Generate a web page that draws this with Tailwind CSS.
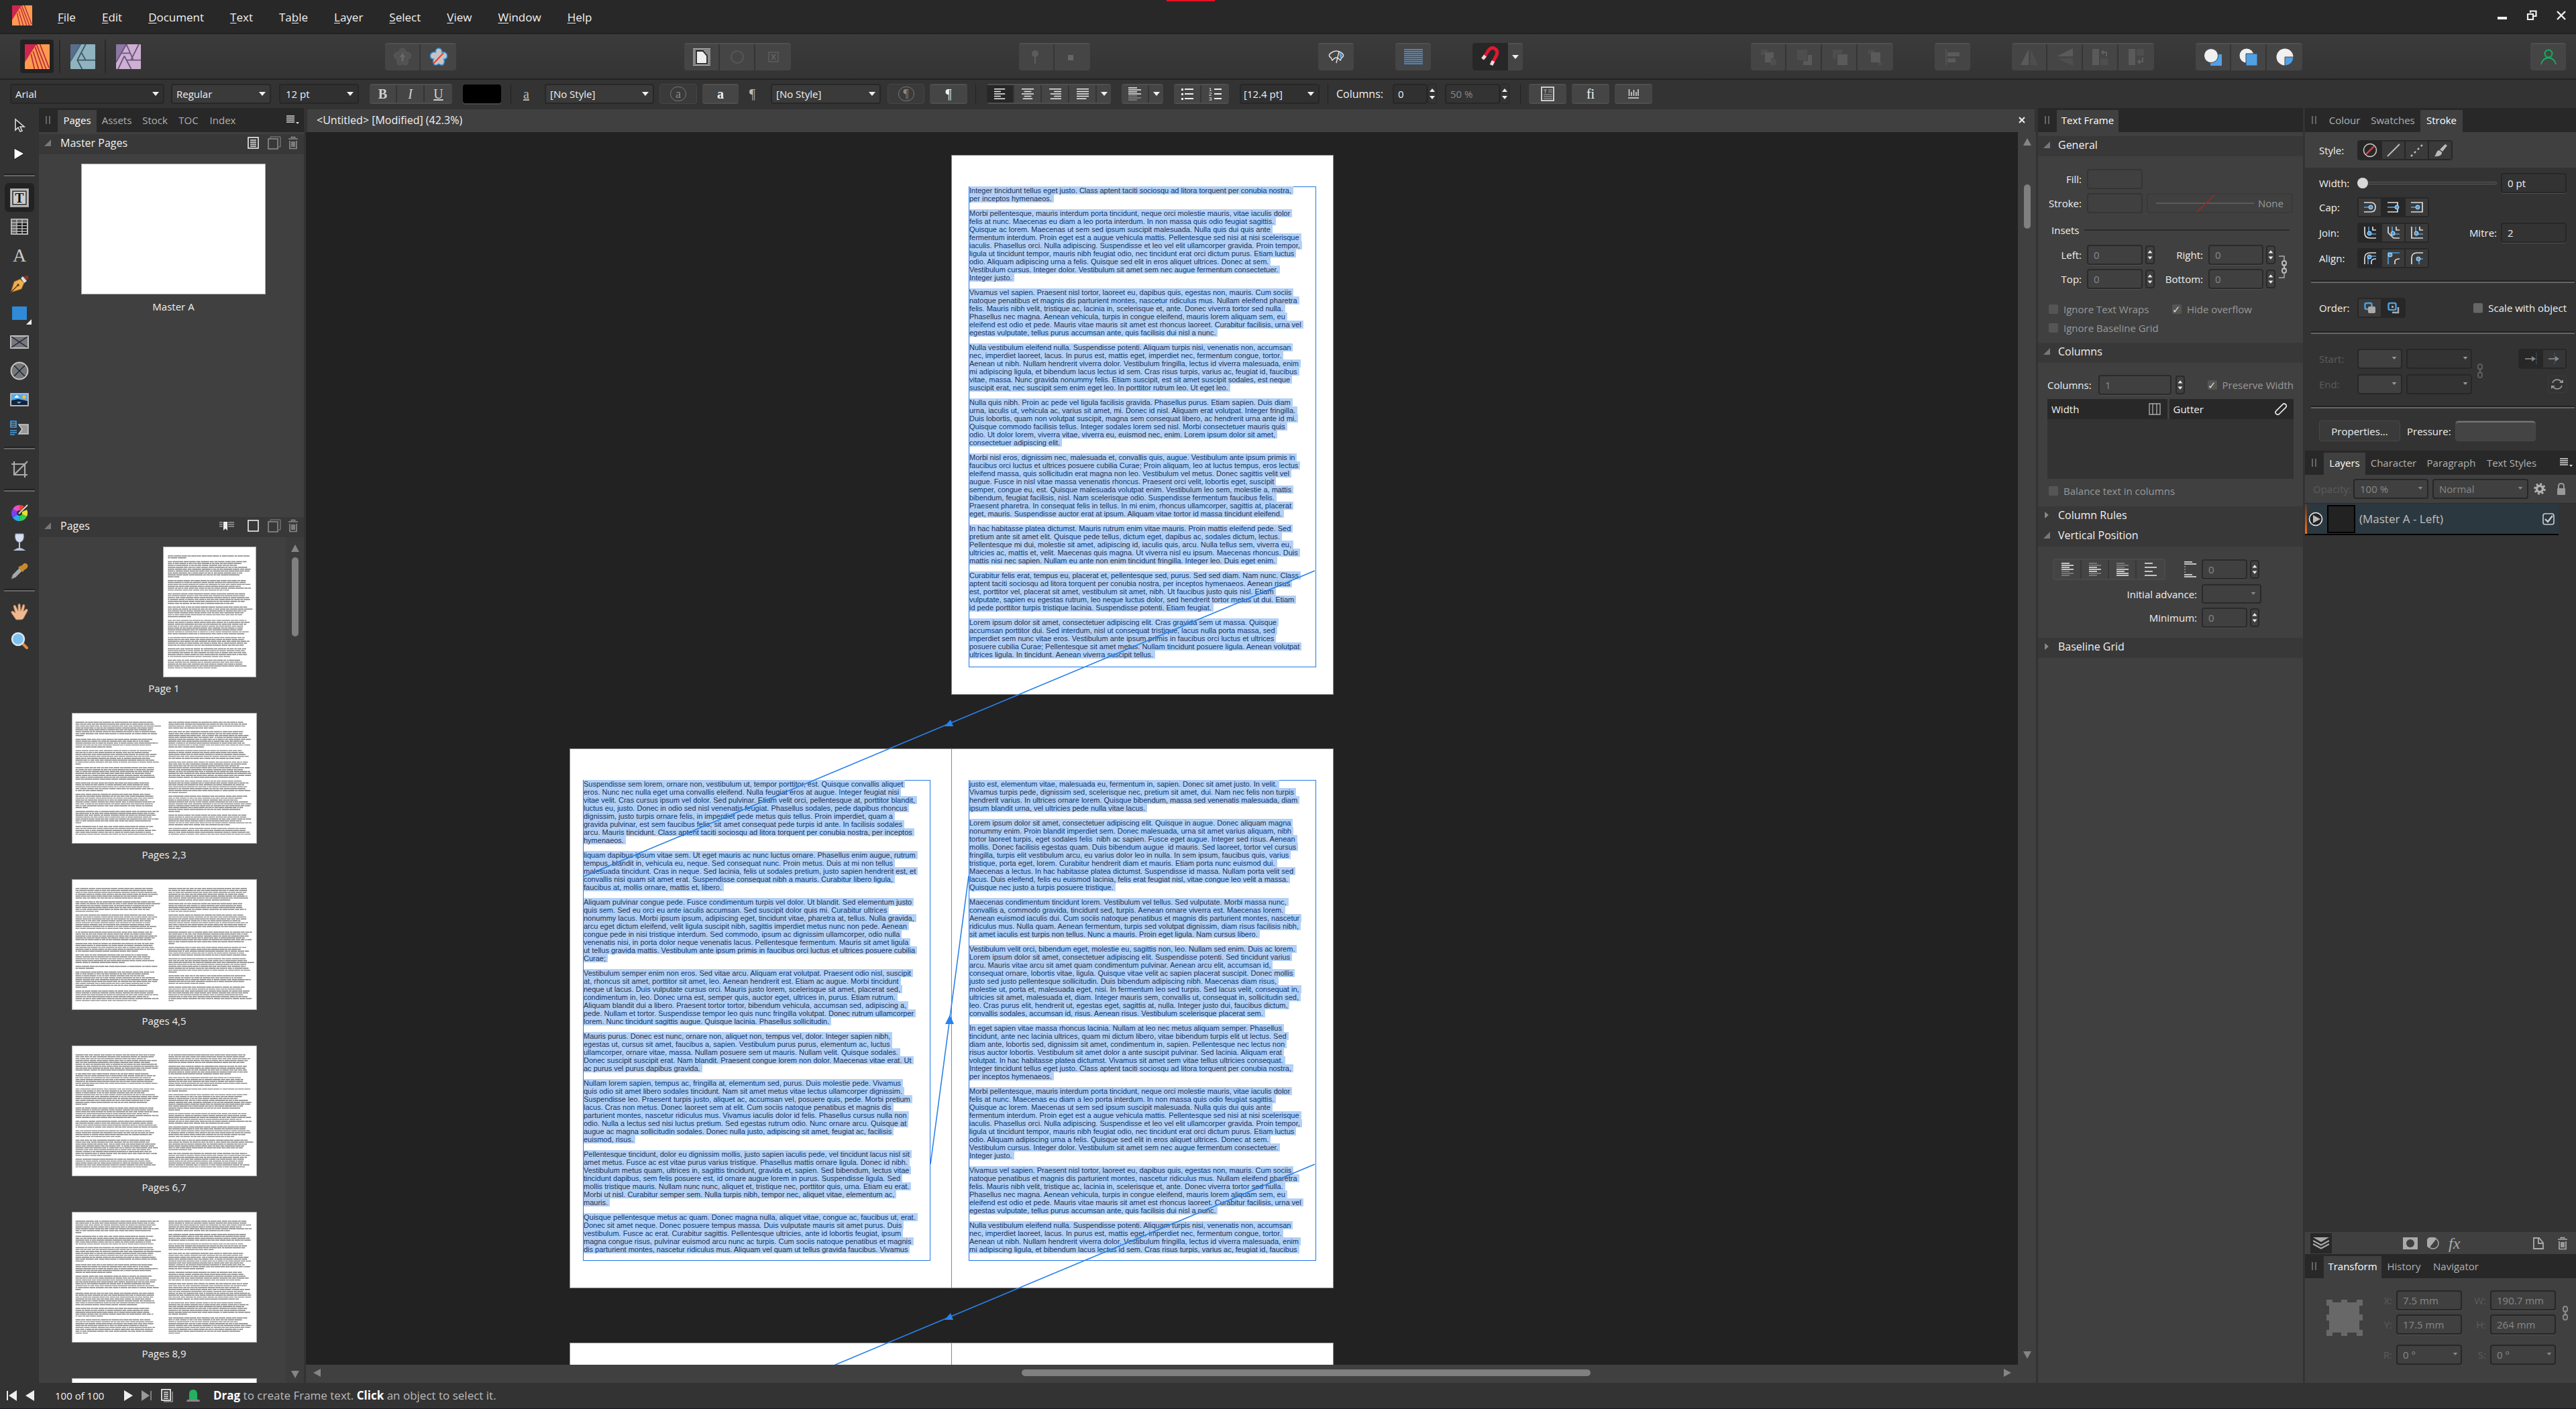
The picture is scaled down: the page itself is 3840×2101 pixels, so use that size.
<!DOCTYPE html>
<html lang="en">
<head>
  <meta charset="utf-8" />
  <title>&lt;Untitled&gt; [Modified] (42.3%)</title>
  <script src="https://cdn.jsdelivr.net/npm/@tailwindcss/browser@4"></script>
</head>
<body class="flex flex-col h-screen overflow-hidden bg-[#333] text-[#f0f0f0] text-[15px] leading-5 font-['Open_Sans','Noto_Sans',sans-serif] [&_select]:appearance-none [&_select]:size-full [&_select]:outline-none [&_svg]:shrink-0 [&_button]:flex [&_button]:items-center [&_button]:justify-center">

  <!-- shared icons -->
  <svg class="hidden">
    <symbol id="publisher" viewBox="0 0 36 36">
      <rect width="36" height="36" rx="1" fill="#ff9a50" />
      <path d="M0 0H17L0 26Z" fill="#cf2650" />
      <path d="M15 4 26 36M12 10 20 36M9 14 14 36M17 0 31 36M22 0 35 34" stroke="#b5283c" stroke-width="1.6" fill="none" />
    </symbol>
    <symbol id="caret" viewBox="0 0 10 6"><path d="M0 0H10L5 6Z" fill="currentColor" /></symbol>
    <symbol id="fold" viewBox="0 0 10 10"><path d="M10 0V10H0Z" fill="#777" /></symbol>
    <symbol id="unfold" viewBox="0 0 10 14"><path d="M1 0L9 7L1 14Z" fill="#8a8a8a" /></symbol>
    <symbol id="grip" viewBox="0 0 8 12"><path d="M1 0V12M6 0V12" stroke="#666" stroke-width="2" /></symbol>
    <symbol id="panel-menu" viewBox="0 0 20 14"><path d="M0 1H12M0 4H12M0 7H12M0 10H12" stroke="#ddd" stroke-width="1.6" /><path d="M14 10H19L16.500 13Z" fill="#ddd" /></symbol>
    <symbol id="trash" viewBox="0 0 16 20"><path d="M1 4H15M5.500 3V1.500H10.500V3M3 7V18.500H13V7M6 8V16M8 8V16M10 8V16" fill="none" stroke="currentColor" stroke-width="1.7" /></symbol>
    <symbol id="blank-page" viewBox="0 0 18 18"><rect x="1" y="1" width="15" height="16" fill="none" stroke="currentColor" stroke-width="1.600" /></symbol>
    <symbol id="copy-page" viewBox="0 0 20 20"><path d="M4 3V1H19V16H16" fill="none" stroke="currentColor" /><rect x="1" y="4" width="14" height="15" fill="none" stroke="currentColor" stroke-width="1.600" /></symbol>
    <symbol id="chain" viewBox="0 0 10 22"><rect x="2" y="1" width="6" height="8" rx="3" fill="none" stroke="currentColor" stroke-width="2" /><rect x="2" y="13" width="6" height="8" rx="3" fill="none" stroke="currentColor" stroke-width="2" /><path d="M5 7V15" stroke="currentColor" stroke-width="2" /></symbol>
    <symbol id="spin" viewBox="0 0 14 28"><path d="M3 11 7 6 11 11ZM3 17 7 22 11 17Z" fill="#eee" /></symbol>
    <symbol id="up" viewBox="0 0 12 12"><path d="M6 1 12 12H0Z" fill="#858585" /></symbol>
    <symbol id="down" viewBox="0 0 12 12"><path d="M6 11 12 0H0Z" fill="#858585" /></symbol>
    <symbol id="al-left" viewBox="0 0 20 20"><path d="M0 2H18M0 6H11M0 10H18M0 14H11M0 18H18" stroke="currentColor" stroke-width="1.700" /></symbol>
  </svg>

  <!-- menu bar -->
  <header class="relative flex items-center h-[51px] shrink-0 bg-[#282828] border-b-2 border-[#222]">
    <div class="absolute top-0 left-[1739px] w-[72px] h-0.5 bg-[#e81123]"></div>
    <svg class="ml-[18px] size-[30px] -mt-1"><use href="#publisher" /></svg>
    <nav class="flex gap-[39px] ml-[38px] text-[17px] leading-6 pt-0.5 [&_u]:underline-offset-2">
      <a href="#"><u>F</u>ile</a>
      <a href="#"><u>E</u>dit</a>
      <a href="#"><u>D</u>ocument</a>
      <a href="#"><u>T</u>ext</a>
      <a href="#">Ta<u>b</u>le</a>
      <a href="#"><u>L</u>ayer</a>
      <a href="#"><u>S</u>elect</a>
      <a href="#"><u>V</u>iew</a>
      <a href="#"><u>W</u>indow</a>
      <a href="#"><u>H</u>elp</a>
    </nav>
    <div class="flex gap-7 ml-auto mr-[14px] -mt-1">
      <button aria-label="Minimise"><svg class="size-4" viewBox="0 0 16 16"><path d="M1 10H15V14H1Z" fill="#f0f0f0" /></svg></button>
      <button aria-label="Restore"><svg class="size-4" viewBox="0 0 16 16"><path d="M6 4V1.500H14.500V9H11M2 6H10V14H2Z" fill="none" stroke="#f0f0f0" stroke-width="2.200" /></svg></button>
      <button aria-label="Close"><svg class="size-4" viewBox="0 0 16 16"><path d="M2 2 14 14M14 2 2 14" stroke="#f0f0f0" stroke-width="2.400" /></svg></button>
    </div>
  </header>

  <!-- toolbar -->
  <div class="flex items-center justify-between h-[68px] shrink-0 pl-[30px] pr-[15px] bg-linear-to-b from-[#3b3b3b] to-[#343434] border-b-2 border-[#222]">
    <div class="flex items-center w-[204px] [&>button]:h-[50px]">
      <button aria-label="Publisher" class="w-[50px] rounded bg-[#222]"><svg class="size-[37px]"><use href="#publisher" /></svg></button>
      <i class="w-0.5 h-[50px] ml-2 bg-[#292929]"></i>
      <button aria-label="Designer" class="w-[66px]">
        <svg class="size-[37px]" viewBox="0 0 36 36"><rect width="36" height="36" rx="1" fill="#8fb3bf" /><path d="M0 0H15L0 24Z" fill="#586f8e" /><path d="M22 0 10 23 17 36M10 23H36M16 12 22 23" stroke="#405866" stroke-width="1.800" fill="none" /><path d="M15 0 0 25" stroke="#48607a" stroke-width="1.500" /></svg>
      </button>
      <i class="w-0.5 h-[50px] bg-[#292929]"></i>
      <button aria-label="Photo" class="w-[66px]">
        <svg class="size-[37px]" viewBox="0 0 36 36"><rect width="36" height="36" rx="1" fill="#cdb0d2" /><path d="M0 0H15L0 24Z" fill="#8c78a2" /><path d="M15 0 0 26M8 13H21M15 0 25 23M33 0 22 22M12 17 22 36M12 17 3 36M15 23H36" stroke="#6d5680" stroke-width="1.800" fill="none" /></svg>
      </button>
    </div>

    <div class="flex overflow-hidden h-[41px] rounded-sm bg-[#454545] border-t-2 border-[#505050] divide-x-2 divide-[#353535] [&>button]:w-[53px]">
      <button aria-label="Set defaults"><svg class="size-[30px]" viewBox="0 0 30 30"><path d="M15 2c4 0 5 4 4.500 6 4-1 8 1 8 5s-3 5-5 5c2 4 0 9-3 9-2 0-3-1-4.500-2-1.500 1-2.500 2-4.500 2-3 0-5-5-3-9-2 0-5-1-5-5s4-6 8-5C10 6 11 2 15 2Z" fill="#525252" stroke="#5c5c5c" /><path d="M15 9 19 15H16.500V21H13.500V15H11Z" fill="#6a6a6a" /></svg></button>
      <button aria-label="Revert defaults"><svg class="size-[30px]" viewBox="0 0 30 30"><path d="M15 2c4 0 5 4 4.500 6 4-1 8 1 8 5s-3 5-5 5c2 4 0 9-3 9-2 0-3-1-4.500-2-1.500 1-2.500 2-4.500 2-3 0-5-5-3-9-2 0-5-1-5-5s4-6 8-5C10 6 11 2 15 2Z" fill="#c4c4c4" stroke="#3c94dc" stroke-width="1.500" /><path d="M22 9 7 25" stroke="#ef3b30" stroke-width="2" /></svg></button>
    </div>

    <div class="flex overflow-hidden h-[41px] rounded-sm bg-[#454545] border-t-2 border-[#505050] divide-x-2 divide-[#353535] [&>button]:w-[53px]">
      <button aria-label="Text wrap"><svg class="size-7" viewBox="0 0 28 28"><path d="M1 2H27M1 5H27M1 8H27M1 11H27M1 14H27M1 17H27M1 20H27M1 23H27M1 26H27" stroke="#aaa" stroke-width="1.800" /><path d="M6 5H16L22 12V24H6Z" fill="#eee" stroke="#333" stroke-width="2" /></svg></button>
      <button aria-label="Edit wrap outline"><svg class="size-7" viewBox="0 0 28 28"><circle cx="14" cy="14" r="9" fill="none" stroke="#575757" stroke-width="2" /></svg></button>
      <button aria-label="Reset wrap"><svg class="size-7" viewBox="0 0 28 28"><rect x="7" y="7" width="14" height="14" fill="none" stroke="#575757" stroke-width="2" /><path d="M11 10 17 18M17 10 11 18" stroke="#626262" stroke-width="2" /></svg></button>
    </div>

    <div class="flex overflow-hidden h-[41px] rounded-sm bg-[#454545] border-t-2 border-[#505050] divide-x-2 divide-[#353535] [&>button]:w-[53px]">
      <button aria-label="Pin"><svg class="size-7" viewBox="0 0 28 28"><circle cx="12" cy="9" r="5" fill="#5c5c5c" /><path d="M12 12V24" stroke="#5c5c5c" stroke-width="2" /></svg></button>
      <button aria-label="Inline"><svg class="size-7" viewBox="0 0 28 28"><path d="M7 11H15V19H7Z" fill="#666" /></svg></button>
    </div>

    <div class="flex gap-[62px]">
      <button aria-label="Preview" class="w-[53px] h-[41px] rounded-sm bg-[#454545] border-t-2 border-[#505050]"><svg class="size-6" viewBox="0 0 24 24"><path d="M4 13C0 11 1 8 4 6Q12 0 20 6C23 8 24 11 20 13L18 17 15 14Q12 12 9 14L6 17Z" fill="#444" stroke="#ddd" stroke-width="1.600" /><path d="M16 5 21 9 18 15Z" fill="#58a9ea" /><path d="M16 4 12 21" stroke="#ddd" stroke-width="1.500" /></svg></button>
      <button aria-label="Baseline grid" class="w-[53px] h-[41px] rounded-sm bg-[#454545] border-t-2 border-[#505050]"><svg class="size-7" viewBox="0 0 28 28"><path d="M0 3H28M0 6H28M0 9H28M0 12H28M0 15H28M0 18H28M0 21H28M0 24H28" stroke="#5b96d8" stroke-width="1.400" /></svg></button>
      <div class="flex overflow-hidden h-[41px] rounded-sm">
        <button aria-label="Snapping" class="w-[53px] bg-[#272727]"><svg class="size-8" viewBox="0 0 32 32"><path d="M6 18 13 7Q18 1 23 5Q28 9 24 16L18 27" fill="none" stroke="#e01832" stroke-width="5" /><path d="M8 15 4 20M20 23 17 29" stroke="#e8dada" stroke-width="5" /></svg></button>
        <button aria-label="Snapping options" class="w-[22px] bg-[#454545] border-t-2 border-[#505050]"><svg class="w-2.5 h-1.5"><use href="#caret" /></svg></button>
      </div>
    </div>

    <div class="flex gap-[62px]">
      <div class="flex overflow-hidden h-[41px] rounded-sm bg-[#454545] border-t-2 border-[#505050] divide-x-2 divide-[#353535] [&>button]:w-[53px]">
        <button aria-label="Move to back"><svg class="size-7" viewBox="0 0 28 28"><path d="M3 3H13V11H3ZM17 17H26V26H17Z" fill="#4e4e4e" /><path d="M9 7H22V16H18V22H9Z" fill="#5a5a5a" /></svg></button>
        <button aria-label="Move back one"><svg class="size-7" viewBox="0 0 28 28"><path d="M4 3H19V19H4Z" fill="#4e4e4e" /><path d="M20 11H26V26H13V20H20Z" fill="#5a5a5a" /></svg></button>
        <button aria-label="Move forward one"><svg class="size-7" viewBox="0 0 28 28"><path d="M4 3H18V9H9V16H4Z" fill="#4e4e4e" /><path d="M11 10H26V26H11Z" fill="#5a5a5a" /></svg></button>
        <button aria-label="Move to front"><svg class="size-7" viewBox="0 0 28 28"><path d="M3 3H12V9H3ZM18 22H24V26H18Z" fill="#4e4e4e" /><path d="M7 7H21V22H7Z" fill="#5a5a5a" /></svg></button>
      </div>
      <button aria-label="Alignment" class="w-[53px] h-[41px] rounded-sm bg-[#454545] border-t-2 border-[#505050]"><svg class="size-7" viewBox="0 0 28 28"><path d="M4 2V26" stroke="#525252" stroke-width="2" /><path d="M6 7H24V13H6ZM6 16H18V22H6Z" fill="#5a5a5a" /></svg></button>
      <div class="flex overflow-hidden h-[41px] rounded-sm bg-[#454545] border-t-2 border-[#505050] divide-x-2 divide-[#353535] [&>button]:w-[53px]">
        <button aria-label="Flip horizontal"><svg class="size-7" viewBox="0 0 28 28"><path d="M13 2V26H1Z" fill="#5a5a5a" /><path d="M16 2V26H27Z" fill="#4e4e4e" /></svg></button>
        <button aria-label="Flip vertical"><svg class="size-7" viewBox="0 0 28 28"><path d="M26 1V13H2Z" fill="#5a5a5a" /><path d="M26 16V27L2 16Z" fill="#4e4e4e" /></svg></button>
        <button aria-label="Rotate left"><svg class="size-7" viewBox="0 0 28 28"><path d="M2 2H12V26H2Z" fill="#5a5a5a" /><path d="M14 16H25V26H14Z" fill="#4e4e4e" /><path d="M23 13V7H17M19 4 16 7 19 10" stroke="#5f5f5f" stroke-width="2" fill="none" /></svg></button>
        <button aria-label="Rotate right"><svg class="size-7" viewBox="0 0 28 28"><path d="M2 2H12V26H2Z" fill="#5a5a5a" /><path d="M14 2H25V12H14Z" fill="#4e4e4e" /><path d="M23 15V21H17M19 18 16 21 19 24" stroke="#5f5f5f" stroke-width="2" fill="none" /></svg></button>
      </div>
      <div class="flex overflow-hidden h-[41px] rounded-sm bg-[#454545] border-t-2 border-[#505050] divide-x-2 divide-[#353535] [&>button]:w-[53px]">
        <button aria-label="Insert behind"><svg class="size-7" viewBox="0 0 28 28"><path d="M10 10H27V27H10Z" fill="#50a1e4" /><circle cx="11" cy="12" r="10.500" fill="#f0f0f0" stroke="#444" /></svg></button>
        <button aria-label="Insert on top"><svg class="size-7" viewBox="0 0 28 28"><circle cx="11" cy="12" r="10.500" fill="#f0f0f0" /><path d="M10 9H27V27H10Z" fill="#50a1e4" stroke="#444" /></svg></button>
        <button aria-label="Insert inside"><svg class="size-7" viewBox="0 0 28 28"><circle cx="14" cy="14" r="12.500" fill="#f0f0f0" /><path d="M14 14H27Q26 26 14 27Z" fill="#50a1e4" stroke="#444" /></svg></button>
      </div>
    </div>

    <button aria-label="Account" class="w-[53px] h-[41px] rounded-sm bg-[#454545] border-t-2 border-[#505050]"><svg class="size-6" viewBox="0 0 24 24"><circle cx="12" cy="7" r="5.500" fill="none" stroke="#10b25f" stroke-width="1.900" /><path d="M1 23Q3 14 12 13Q21 14 23 23" fill="none" stroke="#10b25f" stroke-width="1.900" /></svg></button>
  </div>

  <!-- context toolbar -->
  <div class="flex items-center h-[42px] shrink-0 pl-[15px] [&>i]:w-px [&>i]:h-[30px] [&>i]:bg-[#222]">
    <div class="relative w-[230px] h-[30px]">
      <select aria-label="Font" class="pl-1.5 rounded border-2 border-[#272727] bg-[#303030]"><option>Arial</option></select>
      <svg class="absolute right-2 top-3 w-2.5 h-1.5"><use href="#caret" /></svg>
    </div>
    <div class="relative w-[149px] h-[30px] ml-2.5">
      <select aria-label="Font style" class="pl-1.5 rounded border-2 border-[#272727] bg-[#3a3a3a]"><option>Regular</option></select>
      <svg class="absolute right-2 top-3 w-2.5 h-1.5"><use href="#caret" /></svg>
    </div>
    <div class="relative w-[119px] h-[30px] ml-3">
      <select aria-label="Font size" class="pl-2 rounded border-2 border-[#272727] bg-[#303030]"><option>12 pt</option></select>
      <svg class="absolute right-2 top-3 w-2.5 h-1.5"><use href="#caret" /></svg>
    </div>
    <div class="flex h-[30px] ml-4 rounded-sm bg-[#454545] border-y-2 border-[#4f4f4f] divide-x-2 divide-[#353535] text-xl text-[#d0d0d0] font-['Liberation_Serif',serif] [&>button]:w-[41px]">
      <button class="font-bold">B</button>
      <button class="italic">I</button>
      <button class="underline">U</button>
    </div>
    <button aria-label="Text colour" class="w-[57px] h-7 ml-4 rounded bg-black shadow-[0_2px_0_#454545]"></button>
    <i class="ml-3.5"></i>
    <span class="ml-[18px] w-4 text-xl underline text-[#bbb] font-['Liberation_Serif',serif]">a</span>
    <div class="relative w-[163px] h-[30px] ml-4">
      <select aria-label="Character style" class="pl-1.5 rounded border-2 border-[#272727] bg-[#3a3a3a]"><option>[No Style]</option></select>
      <svg class="absolute right-2 top-3 w-2.5 h-1.5"><use href="#caret" /></svg>
    </div>
    <button aria-label="Update character style" class="w-[56px] h-[30px] ml-2 rounded-sm bg-[#3a3a3a] border border-[#454545] text-[#888] text-lg font-['Liberation_Serif',serif]"><span class="w-6 rounded-full border border-[#777] leading-5 text-center">a</span></button>
    <button aria-label="Character panel" class="w-[54px] h-[30px] ml-2 rounded-sm bg-[#454545] border-y-2 border-[#4f4f4f] text-xl font-bold font-['Liberation_Serif',serif]">a</button>
    <span class="ml-4 w-4 text-xl text-[#bbb] font-['Liberation_Serif',serif]">¶</span>
    <div class="relative w-[164px] h-[30px] ml-4">
      <select aria-label="Paragraph style" class="pl-1.5 rounded border-2 border-[#272727] bg-[#3a3a3a]"><option>[No Style]</option></select>
      <svg class="absolute right-2 top-3 w-2.5 h-1.5"><use href="#caret" /></svg>
    </div>
    <button aria-label="Update paragraph style" class="w-[55px] h-[30px] ml-2.5 rounded-sm bg-[#3a3a3a] border border-[#454545] text-[#888] text-lg font-['Liberation_Serif',serif]"><span class="w-6 rounded-full border border-[#777] leading-5 text-center">¶</span></button>
    <button aria-label="Paragraph panel" class="w-[56px] h-[30px] ml-2 rounded-sm bg-[#454545] border-y-2 border-[#4f4f4f] text-xl font-['Liberation_Serif',serif]">¶</button>
    <i class="ml-3"></i>
    <div class="flex h-[30px] ml-4 rounded-sm bg-[#454545] border-y-2 border-[#4f4f4f] divide-x-2 divide-[#353535] [&>button]:w-[41px]">
      <button aria-label="Align left" class="bg-[#272727]"><svg class="size-[18px]"><use href="#al-left" /></svg></button>
      <button aria-label="Align centre"><svg class="size-[18px]" viewBox="0 0 20 20"><path d="M0 2H20M4 6H16M0 10H20M4 14H16M2 18H18" stroke="#eee" stroke-width="1.700" /></svg></button>
      <button aria-label="Align right"><svg class="size-[18px]" viewBox="0 0 20 20"><path d="M0 2H20M8 6H20M2 10H20M8 14H20M2 18H20" stroke="#eee" stroke-width="1.700" /></svg></button>
      <button aria-label="Justify"><svg class="size-[18px]" viewBox="0 0 20 20"><path d="M0 2H20M0 6H20M0 10H20M0 14H20M0 18H16" stroke="#eee" stroke-width="1.700" /></svg></button>
      <button aria-label="Alignment options" class="max-w-[21px]"><svg class="w-2.5 h-1.5"><use href="#caret" /></svg></button>
    </div>
    <div class="flex h-[30px] ml-4 rounded-sm bg-[#454545] border-y-2 border-[#4f4f4f] divide-x-2 divide-[#353535]">
      <button aria-label="Vertical alignment" class="w-[41px]"><svg class="size-5" viewBox="0 0 20 20"><path d="M0 1H13M0 4H19M0 7H13M0 10H19" stroke="#eee" stroke-width="1.700" /><path d="M0 13H13M0 16H19M0 19H13" stroke="#888" stroke-width="1.700" /></svg></button>
      <button aria-label="Vertical alignment options" class="w-[21px]"><svg class="w-2.5 h-1.5"><use href="#caret" /></svg></button>
    </div>
    <div class="flex h-[30px] ml-4 rounded-sm bg-[#454545] border-y-2 border-[#4f4f4f] divide-x-2 divide-[#353535] [&>button]:w-[41px]">
      <button aria-label="Bullets"><svg class="size-5" viewBox="0 0 20 20"><path d="M6 3H19M6 10H19M6 17H19" stroke="#eee" stroke-width="2" /><path d="M1 2H4V5H1ZM1 9H4V12H1ZM1 16H4V19H1Z" fill="#eee" /></svg></button>
      <button aria-label="Numbering"><svg class="size-6" viewBox="-2 -2 24 24"><path d="M8 3H19M8 10H19M8 17H19" stroke="#eee" stroke-width="2" /><g fill="#eee" font-size="8" font-family="Liberation Sans"><text x="0" y="6">1</text><text x="0" y="13">2</text><text x="0" y="20">3</text></g></svg></button>
    </div>
    <div class="relative w-[119px] h-[30px] ml-4">
      <select aria-label="Leading" class="pl-1 rounded border-2 border-[#272727] bg-[#303030]"><option>[12.4 pt]</option></select>
      <svg class="absolute right-2 top-3 w-2.5 h-1.5"><use href="#caret" /></svg>
    </div>
    <i class="ml-3"></i>
    <label for="columns" class="w-[74px] ml-3 text-base">Columns:</label>
    <input id="columns" value="0" class="w-[52px] h-[30px] ml-2.5 pl-1.5 rounded border-2 border-[#272727] bg-[#303030]" />
    <button aria-label="Step columns" class="w-3.5 rounded border border-[#272727]"><svg class="w-3.5 h-7"><use href="#spin" /></svg></button>
    <input aria-label="Column percentage" value="50 %" class="w-[82px] h-[30px] ml-3 pl-1.5 rounded border-2 border-[#272727] bg-[#333] text-[#888]" />
    <button aria-label="Step percentage" class="w-3.5 rounded border border-[#272727]"><svg class="w-3.5 h-7"><use href="#spin" /></svg></button>
    <i class="ml-4"></i>
    <div class="flex gap-2 ml-3 font-['Liberation_Serif',serif] text-xl [&>button]:w-14 [&>button]:h-[30px] [&>button]:rounded-sm [&>button]:bg-[#454545] [&>button]:border-y-2 [&>button]:border-[#4f4f4f]">
      <button aria-label="Frame properties"><svg class="w-5 h-[22px]" viewBox="0 0 20 22"><rect x="1" y="1" width="18" height="20" fill="#444" stroke="#eee" stroke-width="1.600" /><path d="M4 5H9M6.500 5V10M11 5H17M11 8H17M4 12H17M4 15H17M4 18H17" stroke="#aaa" stroke-width="1.200" /></svg></button>
      <button>fi</button>
      <button aria-label="Text ruler"><svg class="size-4" viewBox="0 0 16 16"><path d="M1.500 1V11M5 5V11M8.500 2V11M12 5V11M15 1V11M0 14H16" stroke="#ddd" stroke-width="1.500" /></svg></button>
    </div>
  </div>

  <main class="flex flex-1 min-h-0 gap-[3px]">
    <div class="flex w-[453px]">
      <!-- tools -->
      <aside class="flex flex-col items-center w-[58px] pt-1 [&>button]:w-11 [&>button]:h-[43px] [&>hr]:w-[46px] [&>hr]:my-2.5 [&>hr]:border-t-2 [&>hr]:border-[#666] [&>hr]:shadow-[0_-2px_0_#222]">
        <button aria-label="Move Tool"><svg class="size-[22px]" viewBox="0 0 22 22"><path d="M5 2V18L9 14 12 20 15 19 12 13H18Z" fill="#222" stroke="#ddd" stroke-width="1.600" /></svg></button>
        <button aria-label="Node Tool"><svg class="size-[22px]" viewBox="0 0 22 22"><path d="M3 2 18 10 3 19Z" fill="#fff" stroke="#111" /></svg></button>
        <hr />
        <button aria-label="Frame Text Tool" class="rounded-md bg-[#222]"><svg class="size-7" viewBox="0 0 28 28"><rect x="1" y="1" width="26" height="26" fill="#d0d0d0" stroke="#aaa" stroke-width="2" /><rect x="4" y="4" width="20" height="20" fill="#ccc" stroke="#222" stroke-width="1.500" /><text x="14" y="21" text-anchor="middle" font-size="20" font-weight="bold" font-family="Liberation Serif" fill="#111">T</text></svg></button>
        <button aria-label="Table Tool"><svg class="w-[26px] h-6" viewBox="0 0 26 24"><rect x="1" y="1" width="24" height="22" fill="#111" stroke="#bbb" stroke-width="2" /><path d="M1 1H25V5H1ZM1 1H9V23H1Z" fill="#999" opacity=".6" /><path d="M9 1V23M17 1V23M1 6H25M1 10.500H25M1 15H25M1 19H25" stroke="#bbb" stroke-width="1.500" /></svg></button>
        <button aria-label="Artistic Text Tool" class="text-[28px] text-[#c8c8c8] font-['Liberation_Serif',serif]">A</button>
        <button aria-label="Pen Tool"><svg class="size-[26px]" viewBox="0 0 26 26"><path d="M0 25 5 9 14 5 20 11 16 20Z" fill="#f0b050" stroke="#8a5a20" /><path d="M0 25 10 15" stroke="#5a3a10" stroke-width="1.400" /><circle cx="11" cy="14" r="1.800" fill="#5a3a10" /><path d="M15 4 18 1 24 8 20 11Z" fill="#e0e0e0" /><path d="M19 1 26 0V5L23 7Z" fill="#8a3a20" /></svg></button>
        <button aria-label="Rectangle Tool" class="relative"><svg class="w-[22px] h-5" viewBox="0 0 22 20"><rect width="22" height="20" fill="#2f8ad8" /></svg><svg class="absolute bottom-1 right-1 size-2" viewBox="0 0 8 8"><path d="M8 0V8H0Z" fill="#eee" /></svg></button>
        <button aria-label="Picture Frame Rectangle Tool"><svg class="w-7 h-5" viewBox="0 0 28 20"><rect x="1" y="1" width="26" height="18" fill="#777" stroke="#ccc" stroke-width="1.800" /><path d="M2 2 26 18M26 2 2 18" stroke="#1c2440" stroke-width="1.500" /></svg></button>
        <button aria-label="Picture Frame Ellipse Tool"><svg class="size-7" viewBox="0 0 28 28"><circle cx="14" cy="14" r="12.500" fill="#777" stroke="#ccc" stroke-width="1.800" /><path d="M6 6 22 22M22 6 6 22" stroke="#1c2440" stroke-width="1.500" /></svg></button>
        <button aria-label="Place Image Tool"><svg class="w-7 h-5" viewBox="0 0 28 20"><rect x="1" y="1" width="26" height="18" fill="#56abea" stroke="#ccc" stroke-width="1.600" /><path d="M2 11 12 9 26 12V18H2Z" fill="#17233c" /><path d="M10 13H17L13 16Z" fill="#5fb0ea" /><circle cx="21" cy="6" r="2.800" fill="#f5bd30" /><path d="M6 7H14L10 3Z" fill="#fff" /></svg></button>
        <button aria-label="Data Merge Layout Tool"><svg class="w-7 h-6" viewBox="0 0 28 24"><path d="M1 1H9V10H1ZM1 4H9M1 7H9M0 15H10M0 18H10M0 21H7" fill="none" stroke="#4a9ee0" stroke-width="1.600" /><path d="M13 6H27V20H13L18 13Z" fill="#999" stroke="#ccc" stroke-width="1.500" /></svg></button>
        <hr class="!my-2" />
        <button aria-label="Vector Crop Tool"><svg class="size-[26px]" viewBox="0 0 26 26"><path d="M5 1V21H25M1 5H21V25M25 1 5 21" fill="none" stroke="#aaa" stroke-width="2.200" /></svg></button>
        <hr />
        <button aria-label="Fill Tool"><svg class="size-[26px]" viewBox="0 0 26 26"><path d="M13 13V1A12 12 0 0 0 3 7Z" fill="#f04fc0" /><path d="M13 13 3 7A12 12 0 0 0 3 20Z" fill="#7a40f0" /><path d="M13 13 3 20A12 12 0 0 0 14 25Z" fill="#2aa8f0" /><path d="M13 13 14 25A12 12 0 0 0 24 18Z" fill="#30d050" /><path d="M13 13 24 18A12 12 0 0 0 24 8Z" fill="#e8e030" /><path d="M13 13 20 3A12 12 0 0 0 13 1Z" fill="#f04030" /><circle cx="13" cy="13" r="4" fill="#333" /><path d="M12 14 25 1" stroke="#ddd" stroke-width="1.800" /></svg></button>
        <button aria-label="Transparency Tool"><svg class="size-[26px]" viewBox="0 0 26 26"><path d="M7 1H19Q21 12 13 14Q5 12 7 1Z" fill="#d6dff0" stroke="#8c9ab8" /><path d="M13 14V23M7 25Q13 21 19 25Z" stroke="#b8c4dc" stroke-width="2" fill="#ccd" /></svg></button>
        <button aria-label="Colour Picker Tool"><svg class="size-[26px]" viewBox="0 0 26 26"><path d="M1 25 3 19 13 9 17 13 7 23Z" fill="#a8a8a8" stroke="#777" /><path d="M11 8 18 15 20 12Q27 9 25 4Q21-1 17 5L14 6Z" fill="#c88a28" /></svg></button>
        <hr class="!my-2" />
        <button aria-label="View Tool"><svg class="size-[26px]" viewBox="0 0 26 26"><path d="M8 25 1 15Q0 12 3 12L7 15 4 5Q5 2 7 4L11 12V3Q12 0 14 2L15 12 18 3Q20 1 21 4L19 13 23 9Q26 9 25 12L19 23Q18 25 15 25Z" fill="#f0b890" stroke="#b07850" stroke-width=".8" /></svg></button>
        <button aria-label="Zoom Tool"><svg class="size-[26px]" viewBox="0 0 26 26"><path d="M17 17 24 24" stroke="#e08a40" stroke-width="4" stroke-linecap="round" /><circle cx="11" cy="11" r="9" fill="#7cc0f0" stroke="#dde6ee" stroke-width="2.500" /></svg></button>
      </aside>

      <!-- pages panel -->
      <section class="flex flex-col flex-1 min-w-0 bg-[#404040]">
        <div class="flex items-end h-9 shrink-0 bg-[#282828] text-[#b0b0b0] [&>button]:h-[33px] [&>button]:pb-1">
          <svg class="w-2 h-3 mx-2.5 mb-3"><use href="#grip" /></svg>
          <button class="w-[58px] bg-[#404040] text-white">Pages</button>
          <button class="w-[60px]">Assets</button>
          <button class="w-[54px]">Stock</button>
          <button class="w-[46px]">TOC</button>
          <button class="w-[56px]">Index</button>
          <button aria-label="Panel menu" class="ml-auto mr-1.5"><svg class="w-5 h-3.5"><use href="#panel-menu" /></svg></button>
        </div>
        <div class="flex items-center h-[30px] shrink-0 mt-[3px] px-2 pb-1 bg-[#383838]">
          <svg class="size-2.5"><use href="#fold" /></svg>
          <h2 class="ml-3.5 text-base">Master Pages</h2>
          <div class="flex items-center gap-2.5 ml-auto text-[#8a8a8a]">
            <button aria-label="Add master" class="mr-0.5 text-[#eee]"><svg class="size-[18px]" viewBox="0 0 18 18"><rect x="1" y="1" width="15" height="16" fill="#333" stroke="currentColor" stroke-width="1.600" /><path d="M4 5H13M4 8H13M4 11H13M4 14H13" stroke="currentColor" stroke-width="1.300" /></svg></button>
            <button aria-label="Duplicate master"><svg class="size-5"><use href="#copy-page" /></svg></button>
            <button aria-label="Delete master"><svg class="w-4 h-5"><use href="#trash" /></svg></button>
          </div>
        </div>
        <figure class="flex flex-col items-center gap-2 h-[541px] shrink-0 pt-3.5 pl-1.5">
          <div class="w-[275px] h-[195px] bg-white border border-[#aaa]"></div>
          <figcaption>Master A</figcaption>
        </figure>
        <div class="flex items-center h-[30px] shrink-0 px-2 pb-1 bg-[#383838]">
          <svg class="size-2.5"><use href="#fold" /></svg>
          <h2 class="ml-3.5 text-base">Pages</h2>
          <div class="flex items-center gap-2.5 ml-auto text-[#8a8a8a]">
            <button aria-label="Sections" class="mr-2.5 text-[#eee]"><svg class="w-[22px] h-4" viewBox="0 0 22 16"><path d="M0 3H5M0 6H5M0 9H5M13 3H22M13 6H22M13 9H22" stroke="#999" stroke-width="1.500" /><path d="M6 2H12V15L9 12 6 15Z" fill="#eee" /></svg></button>
            <button aria-label="Add page" class="mr-0.5 text-[#eee]"><svg class="size-[18px]"><use href="#blank-page" /></svg></button>
            <button aria-label="Duplicate page"><svg class="size-5"><use href="#copy-page" /></svg></button>
            <button aria-label="Delete page"><svg class="w-4 h-5"><use href="#trash" /></svg></button>
          </div>
        </div>
        <div class="flex flex-1 min-h-0">
          <div class="flex-1 pl-[49px] pt-3.5 overflow-hidden [&>figure]:w-[275px] [&>figure]:h-[248px] [&_svg]:w-[137px] [&_svg]:h-[193px] [&_svg]:bg-white [&_div]:flex [&_div]:w-fit [&_div]:ml-auto [&_div]:border [&_div]:border-[#aaa] [&_figcaption]:text-center [&_figcaption]:mt-1.5">
            <figure><div><svg data-thumb="0" viewBox="0 0 570 805" preserveAspectRatio="none"></svg></div><figcaption>Page 1</figcaption></figure>
            <figure><div><svg data-thumb="1" viewBox="0 0 570 805" preserveAspectRatio="none"></svg><svg data-thumb="2" viewBox="0 0 570 805" preserveAspectRatio="none"></svg></div><figcaption>Pages 2,3</figcaption></figure>
            <figure><div><svg data-thumb="3" viewBox="0 0 570 805" preserveAspectRatio="none"></svg><svg data-thumb="4" viewBox="0 0 570 805" preserveAspectRatio="none"></svg></div><figcaption>Pages 4,5</figcaption></figure>
            <figure><div><svg data-thumb="5" viewBox="0 0 570 805" preserveAspectRatio="none"></svg><svg data-thumb="6" viewBox="0 0 570 805" preserveAspectRatio="none"></svg></div><figcaption>Pages 6,7</figcaption></figure>
            <figure><div><svg data-thumb="7" viewBox="0 0 570 805" preserveAspectRatio="none"></svg><svg data-thumb="8" viewBox="0 0 570 805" preserveAspectRatio="none"></svg></div><figcaption>Pages 8,9</figcaption></figure>
            <figure><div><svg data-thumb="9" viewBox="0 0 570 805" preserveAspectRatio="none"></svg><svg data-thumb="10" viewBox="0 0 570 805" preserveAspectRatio="none"></svg></div></figure>
          </div>
          <div class="flex flex-col items-center justify-between w-[27px] py-1.5 bg-[#3c3c3c]">
            <svg class="size-3 mt-1"><use href="#up" /></svg>
            <div class="w-2.5 h-[118px] mt-2 mb-auto rounded-full bg-[#808080]"></div>
            <svg class="size-3"><use href="#down" /></svg>
          </div>
        </div>
      </section>
    </div>

    <!-- document -->
    <section class="flex flex-col flex-1 min-w-0">
      <div class="flex items-center h-[34px] shrink-0 mt-0.5 mx-0.5 px-3.5 pb-0.5 bg-[#404040]">
        <h1 class="text-base">&lt;Untitled&gt; [Modified] (42.3%)</h1>
        <button aria-label="Close document" class="ml-auto"><svg class="size-2.5" viewBox="0 0 10 10"><path d="M1 1 9 9M9 1 1 9" stroke="#eee" stroke-width="2" /></svg></button>
      </div>
      <div class="flex flex-1 min-h-0">
        <div class="relative flex-1 overflow-hidden bg-[#222]">
          <div class="absolute left-[962px] top-[34px] w-[570px] h-[805px] bg-white border border-[#888]">
            <article data-sheet class="absolute left-[25px] top-[46px] w-[518px] h-[717px] border border-[#1f7ae8] text-[11px] leading-[12px] text-[#14335c] font-['Liberation_Sans',Arial,sans-serif] space-y-[10px] [&_p]:whitespace-pre [&>p:first-child]:-mt-px [&_span]:bg-[#b3d1f7] [&_span]:pr-[3px] [&_span]:box-decoration-clone">
<p><span>Integer tincidunt tellus eget justo. Class aptent taciti sociosqu ad litora torquent per conubia nostra,
per inceptos hymenaeos.</span></p><p><span>Morbi pellentesque, mauris interdum porta tincidunt, neque orci molestie mauris, vitae iaculis dolor
felis at nunc. Maecenas eu diam a leo porta interdum. In non massa quis odio feugiat sagittis.
Quisque ac lorem. Maecenas ut sem sed ipsum suscipit malesuada. Nulla quis dui quis ante
fermentum interdum. Proin eget est a augue vehicula mattis. Pellentesque sed nisi at nisi scelerisque
iaculis. Phasellus orci. Nulla adipiscing. Suspendisse et leo vel elit ullamcorper gravida. Proin tempor,
ligula ut tincidunt tempor, mauris nibh feugiat odio, nec tincidunt erat orci dictum purus. Etiam luctus
odio. Aliquam adipiscing urna a felis. Quisque sed elit in eros aliquet ultrices. Donec at sem.
Vestibulum cursus. Integer dolor. Vestibulum sit amet sem nec augue fermentum consectetuer.
Integer justo.</span></p><p><span>Vivamus vel sapien. Praesent nisl tortor, laoreet eu, dapibus quis, egestas non, mauris. Cum sociis
natoque penatibus et magnis dis parturient montes, nascetur ridiculus mus. Nullam eleifend pharetra
felis. Mauris nibh velit, tristique ac, lacinia in, scelerisque et, ante. Donec viverra tortor sed nulla.
Phasellus nec magna. Aenean vehicula, turpis in congue eleifend, mauris lorem aliquam sem, eu
eleifend est odio et pede. Mauris vitae mauris sit amet est rhoncus laoreet. Curabitur facilisis, urna vel
egestas vulputate, tellus purus accumsan ante, quis facilisis dui nisl a nunc.</span></p><p><span>Nulla vestibulum eleifend nulla. Suspendisse potenti. Aliquam turpis nisi, venenatis non, accumsan
nec, imperdiet laoreet, lacus. In purus est, mattis eget, imperdiet nec, fermentum congue, tortor.
Aenean ut nibh. Nullam hendrerit viverra dolor. Vestibulum fringilla, lectus id viverra malesuada, enim
mi adipiscing ligula, et bibendum lacus lectus id sem. Cras risus turpis, varius ac, feugiat id, faucibus
vitae, massa. Nunc gravida nonummy felis. Etiam suscipit, est sit amet suscipit sodales, est neque
suscipit erat, nec suscipit sem enim eget leo. In porttitor rutrum leo. Ut eget leo.</span></p><p><span>Nulla quis nibh. Proin ac pede vel ligula facilisis gravida. Phasellus purus. Etiam sapien. Duis diam
urna, iaculis ut, vehicula ac, varius sit amet, mi. Donec id nisl. Aliquam erat volutpat. Integer fringilla.
Duis lobortis, quam non volutpat suscipit, magna sem consequat libero, ac hendrerit urna ante id mi.
Quisque commodo facilisis tellus. Integer sodales lorem sed nisl. Morbi consectetuer mauris quis
odio. Ut dolor lorem, viverra vitae, viverra eu, euismod nec, enim. Lorem ipsum dolor sit amet,
consectetuer adipiscing elit.</span></p><p><span>Morbi nisl eros, dignissim nec, malesuada et, convallis quis, augue. Vestibulum ante ipsum primis in
faucibus orci luctus et ultrices posuere cubilia Curae; Proin aliquam, leo at luctus tempus, eros lectus
eleifend massa, quis sollicitudin erat magna non leo. Vestibulum vel metus. Donec sagittis velit vel
augue. Fusce in nisl vitae massa venenatis rhoncus. Praesent orci velit, lobortis eget, suscipit
semper, congue eu, est. Quisque malesuada volutpat enim. Vestibulum leo sem, molestie a, mattis
bibendum, feugiat facilisis, nisl. Nam scelerisque odio. Suspendisse fermentum faucibus felis.
Praesent pharetra. In consequat felis in tellus. In mi enim, rhoncus ullamcorper, sagittis at, placerat
eget, mauris. Suspendisse auctor erat at ipsum. Aliquam vitae tortor id massa tincidunt eleifend.</span></p><p><span>In hac habitasse platea dictumst. Mauris rutrum enim vitae mauris. Proin mattis eleifend pede. Sed
pretium ante sit amet elit. Quisque pede tellus, dictum eget, dapibus ac, sodales dictum, lectus.
Pellentesque mi dui, molestie sit amet, adipiscing id, iaculis quis, arcu. Nulla tellus sem, viverra eu,
ultricies ac, mattis et, velit. Maecenas quis magna. Ut viverra nisl eu ipsum. Maecenas rhoncus. Duis
mattis nisi nec sapien. Nullam eu ante non enim tincidunt fringilla. Integer leo. Duis eget enim.</span></p><p><span>Curabitur felis erat, tempus eu, placerat et, pellentesque sed, purus. Sed sed diam. Nam nunc. Class
aptent taciti sociosqu ad litora torquent per conubia nostra, per inceptos hymenaeos. Aenean risus
est, porttitor vel, placerat sit amet, vestibulum sit amet, nibh. Ut faucibus justo quis nisl. Etiam
vulputate, sapien eu egestas rutrum, leo neque luctus dolor, sed hendrerit tortor metus ut dui. Etiam
id pede porttitor turpis tristique lacinia. Suspendisse potenti. Etiam feugiat.</span></p><p><span>Lorem ipsum dolor sit amet, consectetuer adipiscing elit. Cras gravida sem ut massa. Quisque
accumsan porttitor dui. Sed interdum, nisl ut consequat tristique, lacus nulla porta massa, sed
imperdiet sem nunc vitae eros. Vestibulum ante ipsum primis in faucibus orci luctus et ultrices
posuere cubilia Curae; Pellentesque sit amet metus. Nullam tincidunt posuere ligula. Aenean volutpat
ultrices ligula. In tincidunt. Aenean viverra suscipit tellus.</span></p></article>
          </div>

          <div class="absolute left-[393px] top-[919px] w-[570px] h-[805px] bg-white border border-[#888]">
            <article data-sheet class="absolute left-[19px] top-[46px] w-[518px] h-[717px] border border-[#1f7ae8] text-[11px] leading-[12px] text-[#14335c] font-['Liberation_Sans',Arial,sans-serif] space-y-[10px] [&_p]:whitespace-pre [&>p:first-child]:-mt-px [&_span]:bg-[#b3d1f7] [&_span]:pr-[3px] [&_span]:box-decoration-clone">
<p><span>Suspendisse sem lorem, ornare non, vestibulum ut, tempor porttitor, est. Quisque convallis aliquet
eros. Nunc nec nulla eget urna convallis eleifend. Nulla feugiat eros at augue. Integer feugiat nisi
vitae velit. Cras cursus ipsum vel dolor. Sed pulvinar. Etiam velit orci, pellentesque at, porttitor blandit,
luctus eu, justo. Donec in odio sed nisl venenatis feugiat. Phasellus sodales, pede dapibus rhoncus
dignissim, justo turpis ornare felis, in imperdiet pede metus quis tellus. Proin imperdiet, quam a
gravida pulvinar, est sem faucibus felis, sit amet consequat pede turpis id ante. In facilisis sodales
arcu. Mauris tincidunt. Class aptent taciti sociosqu ad litora torquent per conubia nostra, per inceptos
hymenaeos.</span></p><p><span>liquam dapibus ipsum vitae sem. Ut eget mauris ac nunc luctus ornare. Phasellus enim augue, rutrum
tempus, blandit in, vehicula eu, neque. Sed consequat nunc. Proin metus. Duis at mi non tellus
malesuada tincidunt. Cras in neque. Sed lacinia, felis ut sodales pretium, justo sapien hendrerit est, et
convallis nisi quam sit amet erat. Suspendisse consequat nibh a mauris. Curabitur libero ligula,
faucibus at, mollis ornare, mattis et, libero.</span></p><p><span>Aliquam pulvinar congue pede. Fusce condimentum turpis vel dolor. Ut blandit. Sed elementum justo
quis sem. Sed eu orci eu ante iaculis accumsan. Sed suscipit dolor quis mi. Curabitur ultrices
nonummy lacus. Morbi ipsum ipsum, adipiscing eget, tincidunt vitae, pharetra at, tellus. Nulla gravida,
arcu eget dictum eleifend, velit ligula suscipit nibh, sagittis imperdiet metus nunc non pede. Aenean
congue pede in nisi tristique interdum. Sed commodo, ipsum ac dignissim ullamcorper, odio nulla
venenatis nisi, in porta dolor neque venenatis lacus. Pellentesque fermentum. Mauris sit amet ligula
ut tellus gravida mattis. Vestibulum ante ipsum primis in faucibus orci luctus et ultrices posuere cubilia
Curae;</span></p><p><span>Vestibulum semper enim non eros. Sed vitae arcu. Aliquam erat volutpat. Praesent odio nisl, suscipit
at, rhoncus sit amet, porttitor sit amet, leo. Aenean hendrerit est. Etiam ac augue. Morbi tincidunt
neque ut lacus. Duis vulputate cursus orci. Mauris justo lorem, scelerisque sit amet, placerat sed,
condimentum in, leo. Donec urna est, semper quis, auctor eget, ultrices in, purus. Etiam rutrum.
Aliquam blandit dui a libero. Praesent tortor tortor, bibendum vehicula, accumsan sed, adipiscing a,
pede. Nullam et tortor. Suspendisse tempor leo quis nunc fringilla volutpat. Donec rutrum ullamcorper
lorem. Nunc tincidunt sagittis augue. Quisque lacinia. Phasellus sollicitudin.</span></p><p><span>Mauris purus. Donec est nunc, ornare non, aliquet non, tempus vel, dolor. Integer sapien nibh,
egestas ut, cursus sit amet, faucibus a, sapien. Vestibulum purus purus, elementum ac, luctus
ullamcorper, ornare vitae, massa. Nullam posuere sem ut mauris. Nullam velit. Quisque sodales.
Donec suscipit suscipit erat. Nam blandit. Praesent congue lorem non dolor. Maecenas vitae erat. Ut
ac purus vel purus dapibus gravida.</span></p><p><span>Nullam lorem sapien, tempus ac, fringilla at, elementum sed, purus. Duis molestie pede. Vivamus
quis odio sit amet libero sodales tincidunt. Nam sit amet metus vitae lectus ullamcorper dignissim.
Suspendisse leo. Praesent turpis justo, aliquet ac, accumsan vel, posuere quis, pede. Morbi pretium
lacus. Cras non metus. Donec laoreet sem at elit. Cum sociis natoque penatibus et magnis dis
parturient montes, nascetur ridiculus mus. Vivamus iaculis dolor id felis. Phasellus cursus nulla non
odio. Nulla a lectus sed nisi luctus pretium. Sed egestas rutrum odio. Nunc ornare arcu. Quisque at
augue ac magna sollicitudin sodales. Donec nulla justo, adipiscing sit amet, feugiat ac, facilisis
euismod, risus.</span></p><p><span>Pellentesque tincidunt, dolor eu dignissim mollis, justo sapien iaculis pede, vel tincidunt lacus nisl sit
amet metus. Fusce ac est vitae purus varius tristique. Phasellus mattis ornare ligula. Donec id nibh.
Vestibulum metus quam, ultrices in, sagittis tincidunt, gravida et, sapien. Sed bibendum, lectus vitae
tincidunt dapibus, sem felis posuere est, id ornare augue lorem in purus. Suspendisse ligula. Sed
mollis tristique mauris. Nullam nunc nunc, aliquet et, tristique nec, porttitor quis, urna. Etiam eu erat.
Morbi ut nisl. Curabitur semper sem. Nulla turpis nibh, tempor nec, aliquet vitae, elementum ac,
mauris.</span></p><p><span>Quisque pellentesque metus ac quam. Donec magna nulla, aliquet vitae, congue ac, faucibus ut, erat.
Donec sit amet neque. Donec posuere tempus massa. Duis vulputate mauris sit amet purus. Duis
vestibulum. Fusce ac erat. Curabitur sagittis. Pellentesque ultricies, ante id lobortis feugiat, ipsum
magna congue risus, pulvinar euismod arcu nunc ac turpis. Cum sociis natoque penatibus et magnis
dis parturient montes, nascetur ridiculus mus. Aliquam vel quam ut tellus gravida faucibus. Vivamus</span></p></article>
          </div>

          <div class="absolute left-[962px] top-[919px] w-[570px] h-[805px] bg-white border border-[#888]">
            <article data-sheet class="absolute left-[25px] top-[46px] w-[518px] h-[717px] border border-[#1f7ae8] text-[11px] leading-[12px] text-[#14335c] font-['Liberation_Sans',Arial,sans-serif] space-y-[10px] [&_p]:whitespace-pre [&>p:first-child]:-mt-px [&_span]:bg-[#b3d1f7] [&_span]:pr-[3px] [&_span]:box-decoration-clone">
<p><span>justo est, elementum vitae, malesuada eu, fermentum in, sapien. Donec sit amet justo. In velit.
Vivamus turpis pede, dignissim sed, scelerisque nec, pretium sit amet, dui. Nam nec felis non turpis
hendrerit varius. In ultrices ornare lorem. Quisque bibendum, massa sed venenatis malesuada, diam
ipsum blandit urna, vel ultricies pede nulla vitae lacus.</span></p><p><span>Lorem ipsum dolor sit amet, consectetuer adipiscing elit. Quisque in augue. Donec aliquam magna
nonummy enim. Proin blandit imperdiet sem. Donec malesuada, urna sit amet varius aliquam, nibh
tortor laoreet turpis, eget sodales felis  nibh ac sapien. Fusce eget augue. Integer sed risus. Aenean
mollis. Donec facilisis egestas quam. Duis bibendum augue  id mauris. Sed laoreet, tortor vel cursus
fringilla, turpis elit vestibulum arcu, eu varius dolor leo in nulla. In sem ipsum, faucibus quis, varius
tristique, porta eget, lorem. Curabitur hendrerit diam et mauris. Etiam porta nunc euismod dui.
Maecenas a lectus. In hac habitasse platea dictumst. Suspendisse id massa. Nullam porta velit sed
lacus. Duis eleifend, felis eu euismod lacinia, felis erat feugiat nisl, vitae congue leo velit a massa.
Quisque nec justo a turpis posuere tristique.</span></p><p><span>Maecenas condimentum tincidunt lorem. Vestibulum vel tellus. Sed vulputate. Morbi massa nunc,
convallis a, commodo gravida, tincidunt sed, turpis. Aenean ornare viverra est. Maecenas lorem.
Aenean euismod iaculis dui. Cum sociis natoque penatibus et magnis dis parturient montes, nascetur
ridiculus mus. Nulla quam. Aenean fermentum, turpis sed volutpat dignissim, diam risus facilisis nibh,
sit amet iaculis est turpis non tellus. Nunc a mauris. Proin eget ligula. Nam cursus libero.</span></p><p><span>Vestibulum velit orci, bibendum eget, molestie eu, sagittis non, leo. Nullam sed enim. Duis ac lorem.
Lorem ipsum dolor sit amet, consectetuer adipiscing elit. Suspendisse potenti. Sed tincidunt varius
arcu. Mauris vitae arcu sit amet quam condimentum pulvinar. Aenean arcu elit, accumsan id,
consequat ornare, lobortis vitae, ligula. Quisque vitae velit ac sapien placerat suscipit. Donec mollis
justo sed justo pellentesque sollicitudin. Duis bibendum adipiscing nibh. Maecenas diam risus,
molestie ut, porta et, malesuada eget, nisi. In fermentum leo sed turpis. Sed lacus velit, consequat in,
ultricies sit amet, malesuada et, diam. Integer mauris sem, convallis ut, consequat in, sollicitudin sed,
leo. Cras purus elit, hendrerit ut, egestas eget, sagittis at, nulla. Integer justo dui, faucibus dictum,
convallis sodales, accumsan id, risus. Aenean risus. Vestibulum scelerisque placerat sem.</span></p><p><span>In eget sapien vitae massa rhoncus lacinia. Nullam at leo nec metus aliquam semper. Phasellus
tincidunt, ante nec lacinia ultrices, quam mi dictum libero, vitae bibendum turpis elit ut lectus. Sed
diam ante, lobortis sed, dignissim sit amet, condimentum in, sapien. Pellentesque nec lectus non
risus auctor lobortis. Vestibulum sit amet dolor a ante suscipit pulvinar. Sed lacinia. Aliquam erat
volutpat. In hac habitasse platea dictumst. Vivamus sit amet sem vitae tellus ultricies consequat.
Integer tincidunt tellus eget justo. Class aptent taciti sociosqu ad litora torquent per conubia nostra,
per inceptos hymenaeos.</span></p><p><span>Morbi pellentesque, mauris interdum porta tincidunt, neque orci molestie mauris, vitae iaculis dolor
felis at nunc. Maecenas eu diam a leo porta interdum. In non massa quis odio feugiat sagittis.
Quisque ac lorem. Maecenas ut sem sed ipsum suscipit malesuada. Nulla quis dui quis ante
fermentum interdum. Proin eget est a augue vehicula mattis. Pellentesque sed nisi at nisi scelerisque
iaculis. Phasellus orci. Nulla adipiscing. Suspendisse et leo vel elit ullamcorper gravida. Proin tempor,
ligula ut tincidunt tempor, mauris nibh feugiat odio, nec tincidunt erat orci dictum purus. Etiam luctus
odio. Aliquam adipiscing urna a felis. Quisque sed elit in eros aliquet ultrices. Donec at sem.
Vestibulum cursus. Integer dolor. Vestibulum sit amet sem nec augue fermentum consectetuer.
Integer justo.</span></p><p><span>Vivamus vel sapien. Praesent nisl tortor, laoreet eu, dapibus quis, egestas non, mauris. Cum sociis
natoque penatibus et magnis dis parturient montes, nascetur ridiculus mus. Nullam eleifend pharetra
felis. Mauris nibh velit, tristique ac, lacinia in, scelerisque et, ante. Donec viverra tortor sed nulla.
Phasellus nec magna. Aenean vehicula, turpis in congue eleifend, mauris lorem aliquam sem, eu
eleifend est odio et pede. Mauris vitae mauris sit amet est rhoncus laoreet. Curabitur facilisis, urna vel
egestas vulputate, tellus purus accumsan ante, quis facilisis dui nisl a nunc.</span></p><p><span>Nulla vestibulum eleifend nulla. Suspendisse potenti. Aliquam turpis nisi, venenatis non, accumsan
nec, imperdiet laoreet, lacus. In purus est, mattis eget, imperdiet nec, fermentum congue, tortor.
Aenean ut nibh. Nullam hendrerit viverra dolor. Vestibulum fringilla, lectus id viverra malesuada, enim
mi adipiscing ligula, et bibendum lacus lectus id sem. Cras risus turpis, varius ac, feugiat id, faucibus</span></p></article>
          </div>

          <div class="absolute left-[393px] top-[1805px] w-[570px] h-[805px] bg-white border border-[#888]"></div>
          <div class="absolute left-[962px] top-[1805px] w-[570px] h-[805px] bg-white border border-[#888]"></div>

          <!-- text flow between the linked frames -->
          <svg class="absolute inset-0 size-full" fill="none" stroke="#2a82ea" stroke-width="1.600">
            <path d="M1504 654 414 1110M931 1539 988 1109M1504 1539 414 1995" />
            <path d="M952 886 961 876 965 886ZM952 1771 961 1761 965 1771ZM953 1330 960 1316 966 1330Z" fill="#2a82ea" stroke="none" />
          </svg>
        </div>
        <div class="flex flex-col items-center justify-between w-[27px] pt-2 pb-2 bg-[#404040]">
          <svg class="size-3"><use href="#up" /></svg>
          <div class="w-2.5 h-[66px] mt-[58px] mb-auto rounded-full bg-[#808080]"></div>
          <svg class="size-3"><use href="#down" /></svg>
        </div>
      </div>
      <div class="flex items-center h-[27px] shrink-0 pl-2.5 pr-9 pb-1 bg-[#404040]">
        <svg class="size-3" viewBox="0 0 12 12"><path d="M1 6 12 0V12Z" fill="#858585" /></svg>
        <div class="flex-1 pl-[1045px]"><div class="w-[848px] h-2.5 rounded-full bg-[#808080]"></div></div>
        <svg class="size-3" viewBox="0 0 12 12"><path d="M11 6 0 0V12Z" fill="#858585" /></svg>
      </div>
    </section>

    <!-- text frame panel -->
    <section class="w-[395px] bg-[#404040] [&_h2]:flex [&_h2]:items-center [&_h2]:h-[30px] [&_h2]:pl-2 [&_h2]:pb-1 [&_h2]:gap-3 [&_h2]:bg-[#383838] [&_h2]:text-base [&_h2_svg]:size-2.5 [&_input[type=checkbox]]:appearance-none [&_input[type=checkbox]]:size-3.5 [&_input[type=checkbox]]:rounded-xs [&_input[type=checkbox]]:bg-[#555] [&_input[type=checkbox]]:leading-3.5 [&_input[type=text]]:h-[30px] [&_input[type=text]]:pl-2 [&_input[type=text]]:rounded [&_input[type=text]]:border-2 [&_input[type=text]]:border-[#2a2a2a] [&_input[type=text]]:text-[#888] [&_input[type=text]]:shadow-[0_1px_0_#505050]">
      <div class="flex items-end h-9 bg-[#282828]">
        <svg class="w-2 h-3 mx-2.5 mb-3"><use href="#grip" /></svg>
        <button class="w-[92px] h-[33px] pb-1 bg-[#404040] text-white">Text Frame</button>
      </div>
      <h2 class="mt-1.5"><svg><use href="#fold" /></svg>General</h2>
      <div class="flex flex-col h-[278px] px-3.5 pt-4">
        <div class="flex items-center h-9">
          <span class="w-[51px] text-right mr-2">Fill:</span>
          <button aria-label="Fill colour" class="w-[83px] h-[30px] rounded border-2 border-[#353535]"></button>
        </div>
        <div class="flex items-center h-9">
          <span class="w-[51px] text-right mr-2">Stroke:</span>
          <button aria-label="Stroke colour" class="w-[83px] h-[30px] rounded border-2 border-[#353535]"></button>
          <button class="relative w-[218px] h-[30px] ml-1.5 rounded border-2 border-[#3a3a3a] text-[#999]"><svg class="w-[146px] h-7 mr-1.5" viewBox="0 0 146 28"><path d="M0 14H146" stroke="#777" /><path d="M61 27 87 2" stroke="#a22828" stroke-width="1.500" /></svg>None</button>
        </div>
        <div class="flex items-center gap-2 h-11 pl-1.5 pr-1.5"><span>Insets</span><hr class="flex-1 border-t-2 border-[#2a2a2a]" /></div>
        <div class="relative grid gap-y-1.5 grid-cols-[51px_83px_14px_auto_82px_14px] items-center justify-start">
          <label for="in-left" class="text-right">Left:</label><input type="text" id="in-left" value="0" class="ml-2 w-[83px]" />
          <button aria-label="Step left" class="ml-3 w-3.5 rounded border-2 border-[#2a2a2a]"><svg class="w-3.5 h-6"><use href="#spin" /></svg></button>
          <label for="in-right" class="w-[84px] text-right">Right:</label><input type="text" id="in-right" value="0" class="ml-2 w-[82px]" />
          <button aria-label="Step right" class="ml-3 w-3.5 rounded border-2 border-[#2a2a2a]"><svg class="w-3.5 h-6"><use href="#spin" /></svg></button>
          <label for="in-top" class="text-right">Top:</label><input type="text" id="in-top" value="0" class="ml-2 w-[83px]" />
          <button aria-label="Step top" class="ml-3 w-3.5 rounded border-2 border-[#2a2a2a]"><svg class="w-3.5 h-6"><use href="#spin" /></svg></button>
          <label for="in-bottom" class="w-[84px] text-right">Bottom:</label><input type="text" id="in-bottom" value="0" class="ml-2 w-[82px]" />
          <button aria-label="Step bottom" class="ml-3 w-3.5 rounded border-2 border-[#2a2a2a]"><svg class="w-3.5 h-6"><use href="#spin" /></svg></button>
          <svg class="absolute right-2.5 top-4 w-3 h-[34px]" viewBox="0 0 12 34"><path d="M0 1H8V8M0 33H8V26" fill="none" stroke="#aaa" stroke-width="1.500" /><rect x="5" y="8" width="6" height="7" rx="3" fill="none" stroke="#bbb" stroke-width="2" /><rect x="5" y="19" width="6" height="7" rx="3" fill="none" stroke="#bbb" stroke-width="2" /><path d="M8 13V21" stroke="#bbb" stroke-width="2" /></svg>
        </div>
        <div class="grid grid-cols-[184px_auto] gap-y-2 pt-5 pl-0.5 text-[#999] [&_label]:flex [&_label]:items-center [&_label]:gap-2">
          <label><input type="checkbox" disabled />Ignore Text Wraps</label>
          <label><input type="checkbox" checked class="checked:before:content-['✓'] text-[#ddd]" />Hide overflow</label>
          <label><input type="checkbox" disabled />Ignore Baseline Grid</label>
        </div>
      </div>
      <h2><svg><use href="#fold" /></svg>Columns</h2>
      <div class="h-[214px] px-3.5 pt-[18px]">
        <div class="flex items-center h-[30px]">
          <label for="cols" class="w-[68px]">Columns:</label>
          <input type="text" id="cols" value="1" class="ml-2 w-[109px]" />
          <button aria-label="Step columns" class="ml-1.5 w-3.5 rounded border-2 border-[#2a2a2a]"><svg class="w-3.5 h-6"><use href="#spin" /></svg></button>
          <label class="flex items-center gap-2 ml-auto text-[#999]"><input type="checkbox" checked class="checked:before:content-['✓'] text-[#ddd]" />Preserve Width</label>
        </div>
        <table class="w-full h-[119px] mt-1.5 mb-2 bg-[#333] border-collapse">
          <thead><tr class="h-[30px] bg-[#282828]">
            <th class="w-[180px] pl-1.5 pr-2.5 text-left font-normal border-r-3 border-[#404040]"><div class="flex items-center justify-between">Width<svg class="w-[18px] h-[18px]" viewBox="0 0 18 18"><path d="M1 1H17V17H1ZM6 1V17M12 1V17" fill="none" stroke="#aaa" stroke-width="1.400" /></svg></div></th>
            <th class="pl-1.5 pr-2.5 text-left font-normal"><div class="flex items-center justify-between">Gutter<svg class="size-[18px]" viewBox="0 0 18 18"><rect x="-1" y="6" width="20" height="6.500" rx="3.200" fill="none" stroke="#eee" stroke-width="1.600" transform="rotate(-45 9 9)" /></svg></div></th>
          </tr></thead>
          <tbody><tr><td></td><td></td></tr></tbody>
        </table>
        <label class="flex items-center gap-2 pl-0.5 text-[#999]"><input type="checkbox" disabled />Balance text in columns</label>
      </div>
      <h2><svg><use href="#unfold" /></svg>Column Rules</h2>
      <h2><svg><use href="#fold" /></svg>Vertical Position</h2>
      <div class="flex flex-col gap-1.5 h-[136px] pl-[22px] pt-[18px]">
        <div class="flex items-center">
          <div class="flex h-[32px] rounded bg-[#444] border-2 border-[#4a4a4a] divide-x-2 divide-[#383838] [&>button]:w-[41px]">
            <button aria-label="Top"><svg class="w-[18px] h-5" viewBox="0 0 18 20"><path d="M0 1H12M0 4H18M0 7H12M0 10H18" stroke="#eee" stroke-width="1.600" /><path d="M0 13H12M0 16H18M0 19H12" stroke="#888" stroke-width="1.600" /></svg></button>
            <button aria-label="Centre"><svg class="w-[18px] h-5" viewBox="0 0 18 20"><path d="M0 1H12M0 4H18M0 16H18M0 19H12" stroke="#888" stroke-width="1.600" /><path d="M0 7H12M0 10H18M0 13H12" stroke="#eee" stroke-width="1.600" /></svg></button>
            <button aria-label="Bottom"><svg class="w-[18px] h-5" viewBox="0 0 18 20"><path d="M0 1H12M0 4H18M0 7H12" stroke="#888" stroke-width="1.600" /><path d="M0 10H18M0 13H12M0 16H18M0 19H18" stroke="#eee" stroke-width="1.600" /></svg></button>
            <button aria-label="Justify"><svg class="w-[18px] h-5" viewBox="0 0 18 20"><path d="M0 1H12M0 7H18M0 13H12M0 19H18" stroke="#eee" stroke-width="1.600" /></svg></button>
          </div>
          <svg class="w-[18px] h-6 ml-7" viewBox="0 0 18 24"><path d="M0 1H12M0 4H18M0 20H12M0 23H18" stroke="#eee" stroke-width="1.600" /><path d="M1 7V18" stroke="#999" stroke-width="1.500" stroke-dasharray="2 2" /></svg>
          <input type="text" aria-label="Paragraph spacing" value="0" class="ml-2 w-[68px]" />
          <button aria-label="Step spacing" class="ml-1 w-3.5 rounded border-2 border-[#2a2a2a]"><svg class="w-3.5 h-6"><use href="#spin" /></svg></button>
        </div>
        <div class="flex items-center">
          <label for="advance" class="w-[215px] text-right">Initial advance:</label>
          <div class="relative w-[89px] h-[29px] ml-[7px] text-[#888]">
            <select id="advance" class="rounded border-2 border-[#2a2a2a]"><option></option></select>
            <svg class="absolute right-2 top-3 w-2 h-1"><use href="#caret" /></svg>
          </div>
        </div>
        <div class="flex items-center">
          <label for="minimum" class="w-[215px] text-right">Minimum:</label>
          <input type="text" id="minimum" value="0" class="ml-[7px] w-[68px]" />
          <button aria-label="Step minimum" class="ml-1 w-3.5 rounded border-2 border-[#2a2a2a]"><svg class="w-3.5 h-6"><use href="#spin" /></svg></button>
        </div>
      </div>
      <h2><svg><use href="#unfold" /></svg>Baseline Grid</h2>
    </section>

    <!-- studio column -->
    <section class="flex flex-col w-[404px] [&_input]:h-[30px] [&_input]:pl-2 [&_input]:rounded [&_input]:border-2 [&_input]:border-[#272727] [&_input]:shadow-[0_1px_0_#505050]">
      <div class="flex items-end h-9 shrink-0 bg-[#282828] text-[#b0b0b0] [&>button]:h-[33px] [&>button]:pb-1">
        <svg class="w-2 h-3 mx-2.5 mb-3"><use href="#grip" /></svg>
        <button class="w-[62px]">Colour</button>
        <button class="w-[82px]">Swatches</button>
        <button class="w-[63px] bg-[#404040] text-white">Stroke</button>
      </div>
      <div class="flex items-center h-[53px] shrink-0 pl-[21px] bg-[#404040]">
        <span class="w-[57px]">Style:</span>
        <div class="flex p-0.5 h-[30px] rounded bg-[#272727] gap-0.5 [&>button]:w-[33px] [&>button]:bg-[#3a3a3a]">
          <button aria-label="No line" class="!bg-[#272727]"><svg class="size-[22px]" viewBox="0 0 22 22"><circle cx="11" cy="11" r="9.500" fill="none" stroke="#ccc" stroke-width="1.500" /><path d="M5 17 17 5" stroke="#e04848" stroke-width="2.400" /></svg></button>
          <button aria-label="Solid line"><svg class="size-[22px]" viewBox="0 0 22 22"><path d="M2 20 20 2" stroke="#bbb" stroke-width="2" /></svg></button>
          <button aria-label="Dash line"><svg class="size-[22px]" viewBox="0 0 22 22"><path d="M2 20 20 2" stroke="#bbb" stroke-width="2.500" stroke-dasharray="3 4" /></svg></button>
          <button aria-label="Brush line"><svg class="size-[22px]" viewBox="0 0 22 22"><path d="M2 20C5 18 4 12 9 11L13 14C14 18 8 21 2 20ZM10 10 18 2 21 4 14 13Z" fill="#bbb" /></svg></button>
        </div>
      </div>
      <div class="flex flex-col shrink-0 h-[422px] pl-[21px] pr-3.5 pt-1.5 [&>hr]:-mx-3 [&>hr]:border-t-2 [&>hr]:border-[#666] [&>hr]:shadow-[0_-2px_0_#222]">
        <div class="flex items-center h-[34px]">
          <span class="w-[57px]">Width:</span>
          <div class="relative flex items-center w-[208px]"><div class="w-full h-1 rounded-full border border-[#5c5c5c]"></div><i class="absolute left-0 size-4 rounded-full bg-[#d8d8d8]"></i></div>
          <input aria-label="Stroke width" value="0 pt" class="ml-auto w-[98px]" />
        </div>
        <div class="flex items-center h-[38px]">
          <span class="w-[57px]">Cap:</span>
          <div class="flex p-0.5 h-[30px] rounded bg-[#272727] gap-0.5 [&>button]:w-[33px]">
            <button aria-label="Round cap" class="bg-[#3a3a3a]"><svg class="size-[18px]" viewBox="0 0 18 18"><path d="M0 2H10Q17 2 17 9T10 16H0" fill="none" stroke="#ddd" stroke-width="1.700" /><path d="M0 9H9" stroke="#4a9ee0" stroke-width="1.700" /><circle cx="10" cy="9" r="3" fill="#4a9ee0" stroke="#cde" /></svg></button>
            <button aria-label="Butt cap"><svg class="size-[18px]" viewBox="0 0 18 18"><path d="M0 2H15V16H0" fill="none" stroke="#ddd" stroke-width="1.700" /><path d="M0 9H15" stroke="#4a9ee0" stroke-width="1.700" /><circle cx="14" cy="9" r="3" fill="#4a9ee0" stroke="#cde" /></svg></button>
            <button aria-label="Square cap" class="bg-[#3a3a3a]"><svg class="size-[18px]" viewBox="0 0 18 18"><path d="M0 2H17V16H0" fill="none" stroke="#ddd" stroke-width="1.700" /><path d="M0 9H9" stroke="#4a9ee0" stroke-width="1.700" /><circle cx="10" cy="9" r="3" fill="#4a9ee0" stroke="#cde" /></svg></button>
          </div>
        </div>
        <div class="flex items-center h-[38px]">
          <span class="w-[57px]">Join:</span>
          <div class="flex p-0.5 h-[30px] rounded bg-[#272727] gap-0.5 [&>button]:w-[33px]">
            <button aria-label="Round join"><svg class="size-[18px]" viewBox="0 0 18 18"><path d="M1 0V9Q1 17 9 17H18M13 0V5H18" fill="none" stroke="#ddd" stroke-width="1.700" /><path d="M7 0V11H18" fill="none" stroke="#4a9ee0" stroke-width="1.700" /><circle cx="8" cy="10" r="3" fill="#4a9ee0" stroke="#cde" /></svg></button>
            <button aria-label="Bevel join" class="bg-[#3a3a3a]"><svg class="size-[18px]" viewBox="0 0 18 18"><path d="M1 0V9L9 17H18M13 0V5H18" fill="none" stroke="#ddd" stroke-width="1.700" /><path d="M7 0V11H18" fill="none" stroke="#4a9ee0" stroke-width="1.700" /><circle cx="8" cy="10" r="3" fill="#4a9ee0" stroke="#cde" /></svg></button>
            <button aria-label="Mitre join" class="bg-[#3a3a3a]"><svg class="size-[18px]" viewBox="0 0 18 18"><path d="M1 0V17H18M13 0V5H18" fill="none" stroke="#ddd" stroke-width="1.700" /><path d="M7 0V11H18" fill="none" stroke="#4a9ee0" stroke-width="1.700" /><circle cx="8" cy="10" r="3" fill="#4a9ee0" stroke="#cde" /></svg></button>
          </div>
          <label for="mitre" class="ml-auto mr-1.5">Mitre:</label>
          <input id="mitre" value="2" class="w-[98px]" />
        </div>
        <div class="flex items-center h-[38px]">
          <span class="w-[57px]">Align:</span>
          <div class="flex p-0.5 h-[30px] rounded bg-[#272727] gap-0.5 [&>button]:w-[33px]">
            <button aria-label="Align centre"><svg class="size-[18px]" viewBox="0 0 18 18"><path d="M1 18V9Q1 1 9 1H18M11 18V14Q11 10 18 10" fill="none" stroke="#ddd" stroke-width="1.700" /><path d="M6 18V6H18" fill="none" stroke="#4a9ee0" stroke-width="1.700" /><circle cx="8" cy="7" r="3" fill="#4a9ee0" stroke="#cde" /></svg></button>
            <button aria-label="Align inside" class="bg-[#3a3a3a]"><svg class="size-[18px]" viewBox="0 0 18 18"><path d="M11 18V14Q11 10 18 10" fill="none" stroke="#ddd" stroke-width="1.700" /><path d="M1 18V1H18" fill="none" stroke="#4a9ee0" stroke-width="1.700" /><circle cx="4" cy="4" r="3" fill="#4a9ee0" stroke="#cde" /></svg></button>
            <button aria-label="Align outside" class="bg-[#3a3a3a]"><svg class="size-[18px]" viewBox="0 0 18 18"><path d="M1 18V9Q1 1 9 1H18" fill="none" stroke="#ddd" stroke-width="1.700" /><path d="M12 18V10H18" fill="none" stroke="#4a9ee0" stroke-width="1.700" /><circle cx="11" cy="10" r="3" fill="#4a9ee0" stroke="#cde" /></svg></button>
          </div>
        </div>
        <hr class="mt-4" />
        <div class="flex items-center h-[74px]">
          <span class="w-[57px]">Order:</span>
          <div class="flex p-0.5 h-[30px] rounded bg-[#272727] gap-0.5 [&>button]:w-[33px]">
            <button aria-label="Stroke behind" class="bg-[#3a3a3a]"><svg class="size-[18px]" viewBox="0 0 18 18"><rect x="1.500" y="2" width="10" height="9" rx="2" fill="none" stroke="#4a9ee0" stroke-width="2.500" /><rect x="6" y="7" width="11" height="10" rx="2" fill="#aaa" /></svg></button>
            <button aria-label="Stroke in front"><svg class="size-[18px]" viewBox="0 0 18 18"><path d="M16 8V16H7" fill="none" stroke="#aaa" stroke-width="2.500" /><rect x="1.500" y="2" width="11" height="10" rx="2" fill="#272727" stroke="#4a9ee0" stroke-width="2.500" /><rect x="6" y="6" width="3" height="3" fill="#aaa" /></svg></button>
          </div>
          <label class="flex items-center gap-2 ml-auto"><input type="checkbox" class="appearance-none !size-3.5 !h-3.5 !p-0 !border-0 !rounded-xs bg-[#666]" />Scale with object</label>
        </div>
        <hr />
        <div class="relative grid grid-cols-[57px_67px_98px_auto] gap-y-2 items-center pt-[22px] h-[109px] content-start text-[#5c5c5c] [&_select]:rounded [&_select]:border-2 [&_select]:border-[#272727]">
          <label for="start">Start:</label>
          <div class="relative h-[30px] text-[#999]"><select id="start" class="bg-[#404040]"><option></option></select><svg class="absolute right-2 top-3 w-2 h-1"><use href="#caret" /></svg></div>
          <div class="relative h-[30px] ml-1.5 -mr-1.5 text-[#999]"><select aria-label="Start size"><option></option></select><svg class="absolute right-1.5 top-3 w-2 h-1"><use href="#caret" /></svg></div>
          <div class="flex justify-self-end p-0.5 h-[30px] rounded bg-[#272727] gap-0.5 [&>button]:w-[33px]">
            <button aria-label="Arrow before end"><svg class="size-5" viewBox="0 0 20 20"><path d="M1 10H12" stroke="#888" stroke-width="1.700" /><path d="M11 6 17 10 11 14Z" fill="#888" /><path d="M18 1V19" stroke="#3c6a90" stroke-dasharray="2 1" /></svg></button>
            <button aria-label="Arrow at end" class="bg-[#363636]"><svg class="size-5" viewBox="0 0 20 20"><path d="M1 10H12" stroke="#888" stroke-width="1.700" /><path d="M11 6 17 10 11 14Z" fill="#888" /><path d="M10 1V19" stroke="#3c6a90" stroke-dasharray="2 1" /></svg></button>
          </div>
          <label for="end">End:</label>
          <div class="relative h-[30px] text-[#999]"><select id="end" class="bg-[#404040]"><option></option></select><svg class="absolute right-2 top-3 w-2 h-1"><use href="#caret" /></svg></div>
          <div class="relative h-[30px] ml-1.5 -mr-1.5 text-[#999]"><select aria-label="End size"><option></option></select><svg class="absolute right-1.5 top-3 w-2 h-1"><use href="#caret" /></svg></div>
          <button aria-label="Swap ends" class="justify-self-end w-[28px] h-[26px] rounded border border-[#3c3c3c]"><svg class="size-5" viewBox="0 0 20 20"><path d="M3 8A7.500 7.500 0 0 1 16 6M17 12A7.500 7.500 0 0 1 4 14" fill="none" stroke="#999" stroke-width="1.800" /><path d="M13 8H19V3ZM7 12H1V17Z" fill="#999" /></svg></button>
          <svg class="absolute left-[235px] top-11 w-2.5 h-[22px]"><use href="#chain" /></svg>
        </div>
        <hr />
        <div class="flex items-center pt-[18px]">
          <button class="w-[121px] h-[31px] rounded bg-[#3a3a3a] border border-[#484848]">Properties...</button>
          <span class="ml-2.5">Pressure:</span>
          <button aria-label="Pressure profile" class="w-[120px] h-[31px] ml-1.5 rounded bg-[#444] border border-[#484848] inset-shadow-[0_2px_0_#777]"></button>
        </div>
      </div>

      <div class="flex items-end h-9 shrink-0 bg-[#282828] text-[#b0b0b0] [&>button]:h-[33px] [&>button]:pb-1">
        <svg class="w-2 h-3 mx-2.5 mb-3"><use href="#grip" /></svg>
        <button class="w-[62px] bg-[#404040] text-white">Layers</button>
        <button class="w-[84px]">Character</button>
        <button class="w-[88px]">Paragraph</button>
        <button class="w-[92px]">Text Styles</button>
        <button aria-label="Panel menu" class="ml-auto mr-1"><svg class="w-5 h-3.5"><use href="#panel-menu" /></svg></button>
      </div>
      <div class="flex items-center h-[43px] shrink-0 pl-3 bg-[#404040] text-[#888] border-b border-[#2c2c2c]">
        <label for="opacity" class="w-[60px] text-[#5c5c5c]">Opacity:</label>
        <div class="relative w-[112px] h-[30px]"><select id="opacity" class="pl-2 rounded border-2 border-[#272727]"><option>100 %</option></select><svg class="absolute right-2 top-3 w-2 h-1"><use href="#caret" /></svg></div>
        <div class="relative w-[143px] h-[30px] ml-1.5"><select aria-label="Blend mode" class="pl-2 rounded border-2 border-[#272727]"><option>Normal</option></select><svg class="absolute right-2 top-3 w-2 h-1"><use href="#caret" /></svg></div>
        <button aria-label="Blend ranges" class="ml-2"><svg class="size-[18px]" viewBox="0 0 18 18"><circle cx="9" cy="9" r="7" fill="none" stroke="#b0b0b0" stroke-width="3.500" stroke-dasharray="2.800 2.700" /><circle cx="9" cy="9" r="4.500" fill="none" stroke="#b0b0b0" stroke-width="3.500" /></svg></button>
        <button aria-label="Lock" class="ml-4"><svg class="w-3.5 h-[18px]" viewBox="0 0 14 18"><path d="M3 9V5Q3 1 7 1T11 5V9" fill="none" stroke="#999" stroke-width="2" /><rect x="1" y="8" width="12" height="10" rx="1" fill="#999" /></svg></button>
      </div>
      <ul class="flex-1 pr-[26px]">
        <li class="flex items-center h-[47px] bg-[#2c3840] border-b-2 border-black text-[#c0c0c0]">
          <i class="w-[3px] h-11 bg-linear-to-b from-[#5a3a28] to-[#ff6a00]"></i>
          <svg class="size-[22px] ml-0.5" viewBox="0 0 22 22"><circle cx="11" cy="11" r="9.500" fill="#222" stroke="#eee" stroke-width="1.600" /><path d="M7 5 18 11 7 17Z" fill="#b8b8b8" /></svg>
          <div class="w-[42px] h-[42px] ml-1.5 mr-1.5 border-2 border-black bg-[#222]"></div>
          <span class="text-[17px]">(Master A - Left)</span>
          <svg class="size-[18px] ml-auto mr-1.5" viewBox="0 0 18 18"><rect x="1" y="1" width="16" height="16" rx="3" fill="none" stroke="#ccc" stroke-width="1.600" /><path d="M4 9 8 13 15 4" fill="none" stroke="#ccc" stroke-width="2.400" /></svg>
        </li>
      </ul>
      <div class="flex items-center h-[33px] shrink-0 pl-2 pr-3 bg-[#404040] text-[#aaa]">
        <button aria-label="Layers" class="w-8 h-[30px] bg-[#282828]"><svg class="w-6 h-5" viewBox="0 0 24 20"><path d="M0 1H24L12 8Z" fill="#aaa" /><path d="M0 6 12 12.500 24 6M0 11 12 17.500 24 11" fill="none" stroke="#aaa" stroke-width="2" /></svg></button>
        <button aria-label="Mask" class="ml-[106px]"><svg class="w-[22px] h-[18px]" viewBox="0 0 22 18"><path d="M0 0H22V18H0Z" fill="#aaa" /><circle cx="11" cy="9" r="6" fill="#404040" /></svg></button>
        <button aria-label="Adjustments" class="ml-3.5"><svg class="size-[18px]" viewBox="0 0 18 18"><circle cx="9" cy="9" r="8" fill="none" stroke="#aaa" stroke-width="1.500" /><path d="M14 2A9 9 0 1 0 3 16Z" fill="#aaa" /></svg></button>
        <button class="ml-3.5 text-2xl italic font-['Liberation_Serif',serif]">fx</button>
        <button aria-label="New layer" class="ml-auto"><svg class="w-4 h-[18px]" viewBox="0 0 16 18"><path d="M1 1H9L15 8V17H1ZM8 1V9H15" fill="none" stroke="#aaa" stroke-width="1.800" /></svg></button>
        <button aria-label="Delete layer" class="ml-5"><svg class="w-4 h-5"><use href="#trash" /></svg></button>
      </div>

      <div class="flex items-end h-9 shrink-0 bg-[#282828] text-[#b0b0b0] [&>button]:h-[33px] [&>button]:pb-1">
        <svg class="w-2 h-3 mx-2.5 mb-3"><use href="#grip" /></svg>
        <button class="w-[86px] bg-[#404040] text-white">Transform</button>
        <button class="w-[67px]">History</button>
        <button class="w-[88px]">Navigator</button>
      </div>
      <div class="relative flex h-[156px] shrink-0 pt-[18px] bg-[#404040] text-[#888]">
        <svg class="size-[54px] ml-8 mt-3.5" viewBox="0 0 54 54"><path d="M0 0H9V4H22V0H31V4H45V0H54V9H49V22H54V31H49V45H54V54H45V49H31V54H22V49H9V54H0V45H4V31H0V22H4V9H0Z" fill="#686868" /></svg>
        <div class="grid grid-cols-[22px_98px_42px_98px] gap-y-1.5 content-start items-center ml-7 [&_label]:text-right [&_label]:pr-1.5 [&_label]:text-[#5c5c5c]">
          <label for="tx">X:</label><input id="tx" value="7.5 mm" class="w-full" />
          <label for="tw">W:</label><input id="tw" value="190.7 mm" class="w-full" />
          <label for="ty">Y:</label><input id="ty" value="17.5 mm" class="w-full" />
          <label for="th">H:</label><input id="th" value="264 mm" class="w-full" />
          <label for="tr" class="mt-[9px]">R:</label>
          <div class="relative h-[30px] mt-[9px]"><select id="tr" class="pl-2 rounded border-2 border-[#272727]"><option>0 °</option></select><svg class="absolute right-1.5 top-3 w-2 h-1"><use href="#caret" /></svg></div>
          <label for="ts" class="mt-[9px]">S:</label>
          <div class="relative h-[30px] mt-[9px]"><select id="ts" class="pl-2 rounded border-2 border-[#272727]"><option>0 °</option></select><svg class="absolute right-1.5 top-3 w-2 h-1"><use href="#caret" /></svg></div>
        </div>
        <svg class="w-2.5 h-[22px] ml-[9px] mt-[23px]"><use href="#chain" /></svg>
      </div>
    </section>
  </main>

  <!-- status bar -->
  <footer class="flex items-center h-[39px] shrink-0 pl-2.5 border-b border-[#1c1420]">
    <button aria-label="First page"><svg class="size-4" viewBox="0 0 16 16"><path d="M1 1V15" stroke="#eee" stroke-width="2" /><path d="M15 0V16L3 8Z" fill="#eee" /></svg></button>
    <button aria-label="Previous page" class="ml-2.5"><svg class="size-4" viewBox="0 0 16 16"><path d="M15 0V16L2 8Z" fill="#eee" /></svg></button>
    <span class="w-[76px] mx-[30px] whitespace-nowrap">100 of 100</span>
    <button aria-label="Next page" class="-ml-1"><svg class="size-4" viewBox="0 0 16 16"><path d="M1 0V16L14 8Z" fill="#eee" /></svg></button>
    <button aria-label="Last page" class="ml-2.5"><svg class="size-4" viewBox="0 0 16 16"><path d="M15 1V15" stroke="#999" stroke-width="1.500" /><path d="M1 0V16L13 8Z" fill="#999" /></svg></button>
    <svg class="w-[18px] h-5 ml-3.5" viewBox="0 0 18 20"><path d="M4 19H17V4" fill="none" stroke="#999" stroke-width="1.500" /><rect x="1" y="1" width="13" height="16" fill="#333" stroke="#eee" stroke-width="1.700" /><path d="M4 5H11M4 8H11M4 11H11M4 14H11" stroke="#eee" stroke-width="1.500" /></svg>
    <svg class="w-5 h-[18px] mx-5" viewBox="0 0 20 18"><path d="M4 15V7Q4 0 10 0T16 7V15Z" fill="#24b060" /><path d="M1 15H19L20 18H0Z" fill="#888" /></svg>
    <p class="text-[17px] text-[#bbb]"><b class="text-white">Drag</b> to create Frame text. <b class="text-white">Click</b> an object to select it.</p>
  </footer>

  <script>
    // thumbnails: one dash per word of the laid-out sheets
    const sheets = [...document.querySelectorAll('[data-sheet]')].map((el) =>
      [...el.querySelectorAll('p')].map((p) => p.textContent.split('\n')),
    );

    document.querySelectorAll('[data-thumb]').forEach((svg) => {
      const n = Number(svg.dataset.thumb);
      const paragraphs = sheets[n % 3];
      const shift = Math.floor(n / 3) * 3;
      const left = n % 2 ? 20 : 27;
      let y = 54;
      let d = '';

      paragraphs.forEach((_, i) => {
        paragraphs[(i + shift) % paragraphs.length].forEach((line) => {
          let x = left;
          line.split(' ').forEach((word) => {
            const w = word.length * 5;
            d += `M${x} ${y}h${w}`;
            x += w + 4;
          });
          y += 11.8;
        });
        y += 11.8;
      });

      svg.innerHTML = `<path d="${d}" stroke="#111" stroke-opacity=".7" stroke-width="6" stroke-dasharray="6 2" />`;
    });
  </script>
</body>
</html>
